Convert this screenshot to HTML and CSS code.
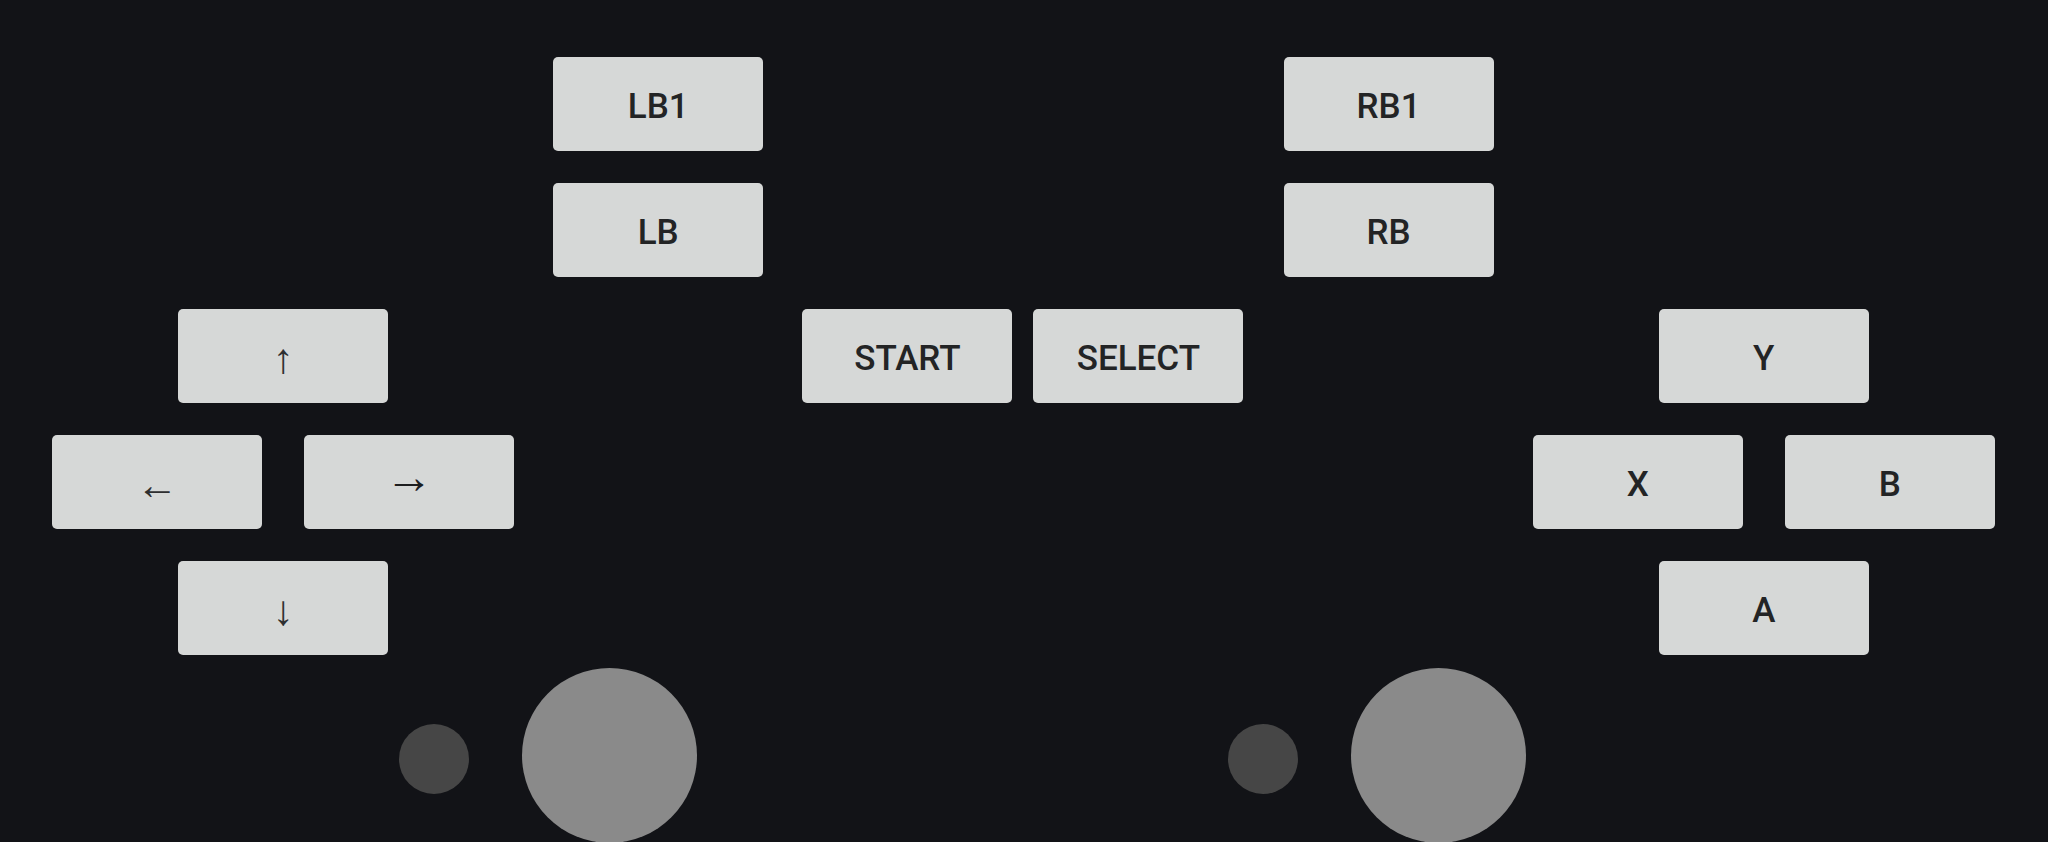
FILE: index.html
```html
<!DOCTYPE html>
<html>
<head>
<meta charset="utf-8">
<link rel="stylesheet" href="styles.css">
</head>
<body>
<div class="pad">
  <div class="board">
    <div class="cluster dpad">
      <div class="btn up">↑</div>
      <div class="btn left">←</div>
      <div class="btn right">→</div>
      <div class="btn down">↓</div>
    </div>
    <div class="shoulder lshoulder">
      <div class="btn">LB1</div>
      <div class="btn">LB</div>
    </div>
    <div class="center">
      <div class="btn">START</div>
      <div class="btn">SELECT</div>
    </div>
    <div class="shoulder rshoulder">
      <div class="btn">RB1</div>
      <div class="btn">RB</div>
    </div>
    <div class="cluster face">
      <div class="btn up">Y</div>
      <div class="btn left">X</div>
      <div class="btn right">B</div>
      <div class="btn down">A</div>
    </div>
  </div>
  <div class="sticks">
    <div class="stick">
      <div class="dot"></div>
      <div class="knob"></div>
    </div>
    <div class="stick">
      <div class="dot"></div>
      <div class="knob"></div>
    </div>
  </div>
</div>
</body>
</html>
```

FILE: styles.css
```css
html, body {
  margin: 0;
  padding: 0;
  height: 100%;
  overflow: hidden;
}
body {
  background: #121317;
  font-family: Roboto, "Liberation Sans", sans-serif;
}
.pad {
  padding: 57px 0 0 52px;
}
.board {
  display: grid;
  grid-template-columns: 462px 210px 442px 210px 462px;
  grid-template-rows: repeat(5, 94px);
  column-gap: 39.2px;
  row-gap: 32px;
}
.btn {
  background: #d6d8d7;
  color: #232425;
  border-radius: 5px;
  display: flex;
  align-items: center;
  justify-content: center;
  font-size: 35px;
  font-weight: 500;
  padding-top: 5px;
  box-sizing: border-box;
}
.cluster {
  grid-row: 3 / span 3;
  display: grid;
  grid-template-columns: repeat(4, 84px);
  grid-template-rows: repeat(3, 94px);
  column-gap: 42px;
  row-gap: 32px;
}
.dpad { grid-column: 1; }
.face { grid-column: 5; }
.cluster .up { grid-row: 1; grid-column: 2 / span 2; }
.cluster .left { grid-row: 2; grid-column: 1 / span 2; }
.cluster .right { grid-row: 2; grid-column: 3 / span 2; }
.cluster .down { grid-row: 3; grid-column: 2 / span 2; }
.dpad .btn { font-weight: 400; font-size: 42px; color: #2e2f30; }
.dpad .right { font-size: 48px; color: #1d1e1f; padding-top: 0; padding-bottom: 12px; }
.shoulder {
  grid-row: 1 / span 2;
  display: grid;
  grid-template-rows: repeat(2, 94px);
  row-gap: 32px;
}
.lshoulder { grid-column: 2; }
.rshoulder { grid-column: 4; }
.center {
  grid-row: 3;
  grid-column: 3;
  display: grid;
  grid-template-columns: 210px 210px;
  column-gap: 21px;
}
.sticks {
  display: flex;
  gap: 531px;
  margin: 13px 0 0 347px;
}
.stick {
  display: flex;
  align-items: center;
  gap: 53px;
}
.dot {
  width: 70px;
  height: 70px;
  border-radius: 50%;
  background: #464646;
  margin-top: 7px;
}
.knob {
  width: 175px;
  height: 175px;
  border-radius: 50%;
  background: #8a8a8a;
}
```
